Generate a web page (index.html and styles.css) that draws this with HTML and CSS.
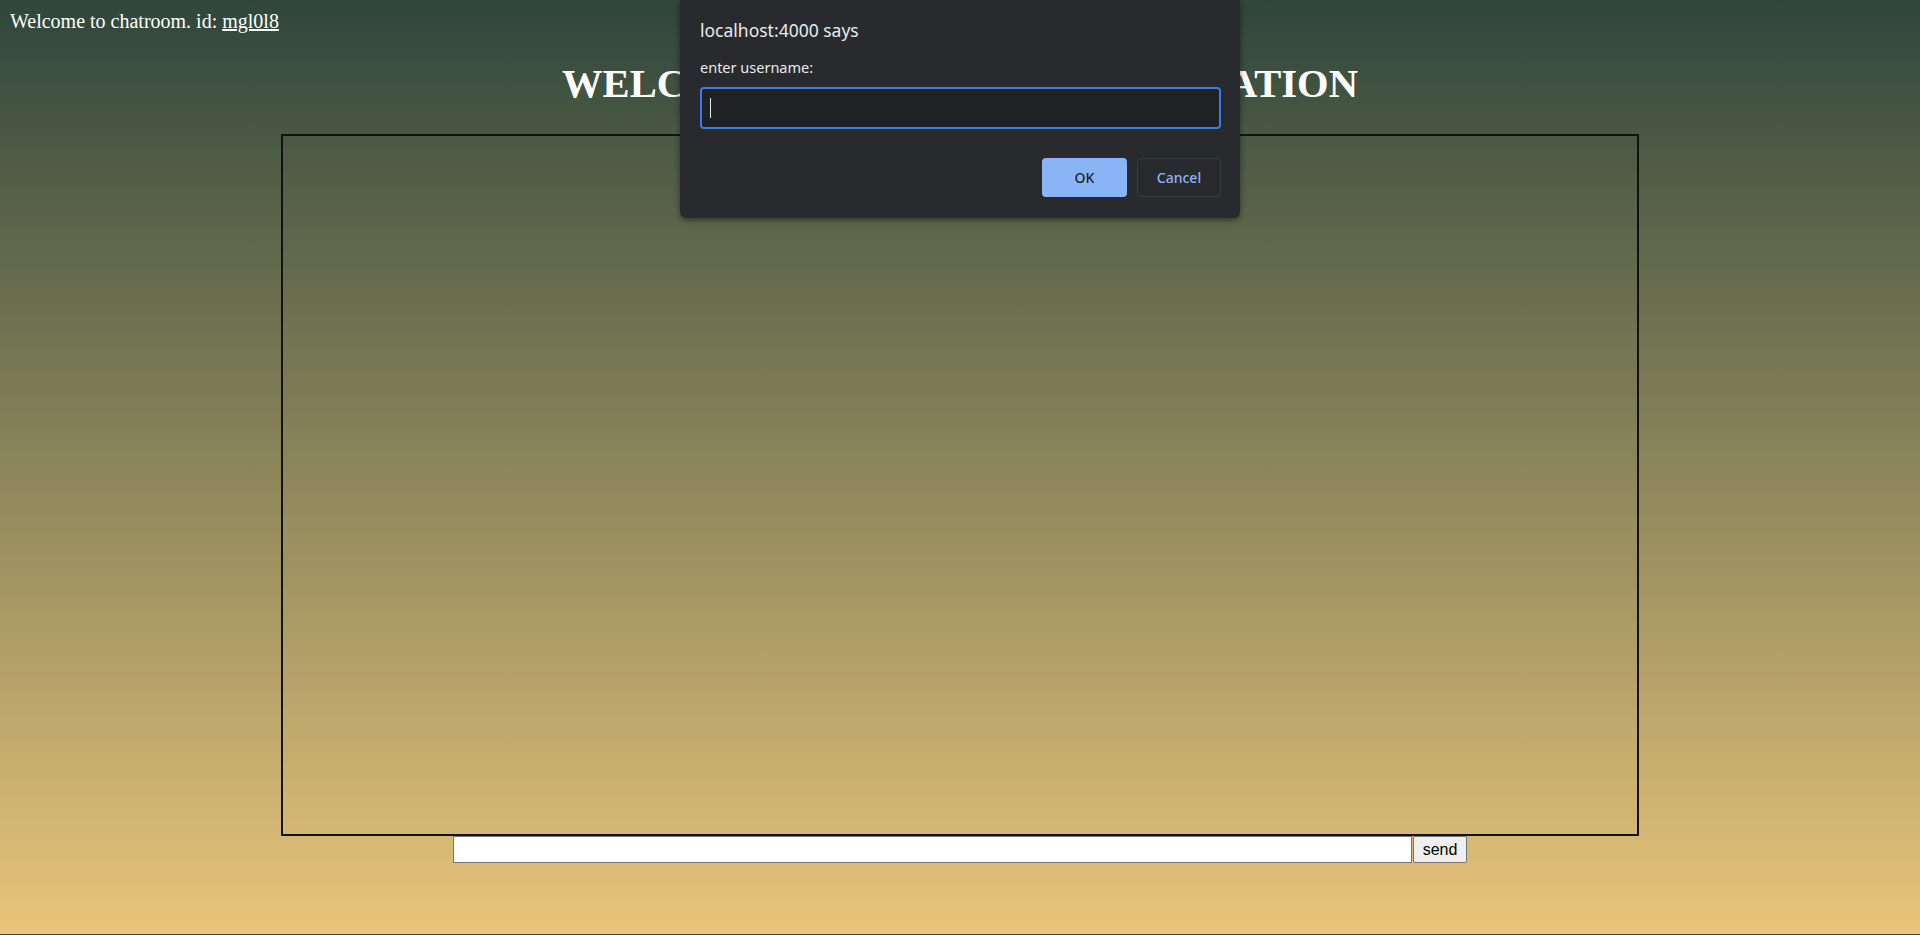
FILE: index.html
```html
<!DOCTYPE html>
<html lang="en">
<head>
<meta charset="utf-8">
<title>Chatroom</title>
<link rel="stylesheet" href="styles.css">
</head>
<body>
  <div class="welcome">Welcome to chatroom. id: <a href="#" class="room-id">mgl0l8</a></div>
  <h1 class="title">WELCOME TO THE CHAT APPLICATION</h1>
  <div class="chatbox"></div>
  <form class="composer">
    <input class="msg-input" type="text">
    <button class="send-btn" type="button">send</button>
  </form>

  <div class="dialog">
    <div class="dialog-title">localhost:4000 says</div>
    <div class="dialog-label">enter username:</div>
    <div class="dialog-input"><span class="caret"></span></div>
    <div class="dialog-actions">
      <button class="btn btn-ok" type="button">OK</button>
      <button class="btn btn-cancel" type="button">Cancel</button>
    </div>
  </div>
</body>
</html>
```

FILE: styles.css
```css
html {
  height: 935px;
  background: linear-gradient(to bottom, #2f463b 0px, #e9c57a 934px, #2f463b 934px, #2f463b 935px);
}

body {
  margin: 8px;
  font-family: "Liberation Serif", "Times New Roman", serif;
  color: #ffffff;
}

.welcome {
  font-size: 20px;
  line-height: 23px;
  padding: 2px 0 0 2px;
}

.room-id {
  color: #ffffff;
  text-decoration: underline;
}

.title {
  margin: 28px 0 27px;
  text-align: center;
  font-size: 40.6px;
  line-height: 46px;
  font-weight: bold;
  color: #ffffff;
}

.chatbox {
  width: 1354px;
  height: 698px;
  margin: 0 auto;
  border: 2px solid #121212;
}

.composer {
  display: flex;
  justify-content: center;
  gap: 1px;
  margin: 0;
}

.msg-input {
  box-sizing: border-box;
  width: 959px;
  height: 27px;
  margin: 0;
  border: 1px solid #767676;
  background: #ffffff;
  font-family: "Liberation Sans", Arial, sans-serif;
  font-size: 16px;
  padding: 1px 2px;
}

.send-btn {
  box-sizing: border-box;
  width: 54px;
  height: 27px;
  margin: 0;
  padding: 0 6px;
  border: 1px solid #767676;
  border-radius: 2px;
  background: #efefef;
  color: #000000;
  font-family: "Liberation Sans", Arial, sans-serif;
  font-size: 16px;
}

/* Browser prompt dialog */
.dialog {
  position: absolute;
  top: 0;
  left: 50%;
  margin-left: -280px;
  width: 560px;
  box-sizing: border-box;
  padding: 18px 19px 21px 20px;
  background: #292a2d;
  border-radius: 0 0 6px 6px;
  box-shadow: 0 2px 6px rgba(0, 0, 0, 0.45);
  font-family: "Noto Sans", "Open Sans", sans-serif;
  color: #e8eaed;
}

.dialog-title {
  font-size: 17.5px;
  line-height: 25px;
}

.dialog-label {
  margin-top: 15px;
  font-size: 14.5px;
  line-height: 19px;
}

.dialog-input {
  margin-top: 10px;
  height: 42px;
  box-sizing: border-box;
  border: 2px solid #3b7ce2;
  border-radius: 4px;
  background: #202124;
  display: flex;
  align-items: center;
  padding-left: 8px;
}

.caret {
  width: 1px;
  height: 20px;
  background: #e8eaed;
}

.dialog-actions {
  margin-top: 29px;
  display: flex;
  justify-content: flex-end;
  gap: 10px;
}

.btn {
  box-sizing: border-box;
  height: 39px;
  border-radius: 4px;
  font-family: "Noto Sans", "Open Sans", sans-serif;
  font-size: 14px;
  font-weight: 500;
  padding: 0;
}

.btn-ok {
  width: 85px;
  border: none;
  background: #8ab4f8;
  color: #202124;
}

.btn-cancel {
  width: 84px;
  border: 1px solid #3c3d41;
  background: #292a2d;
  color: #8ab4f8;
}
```
